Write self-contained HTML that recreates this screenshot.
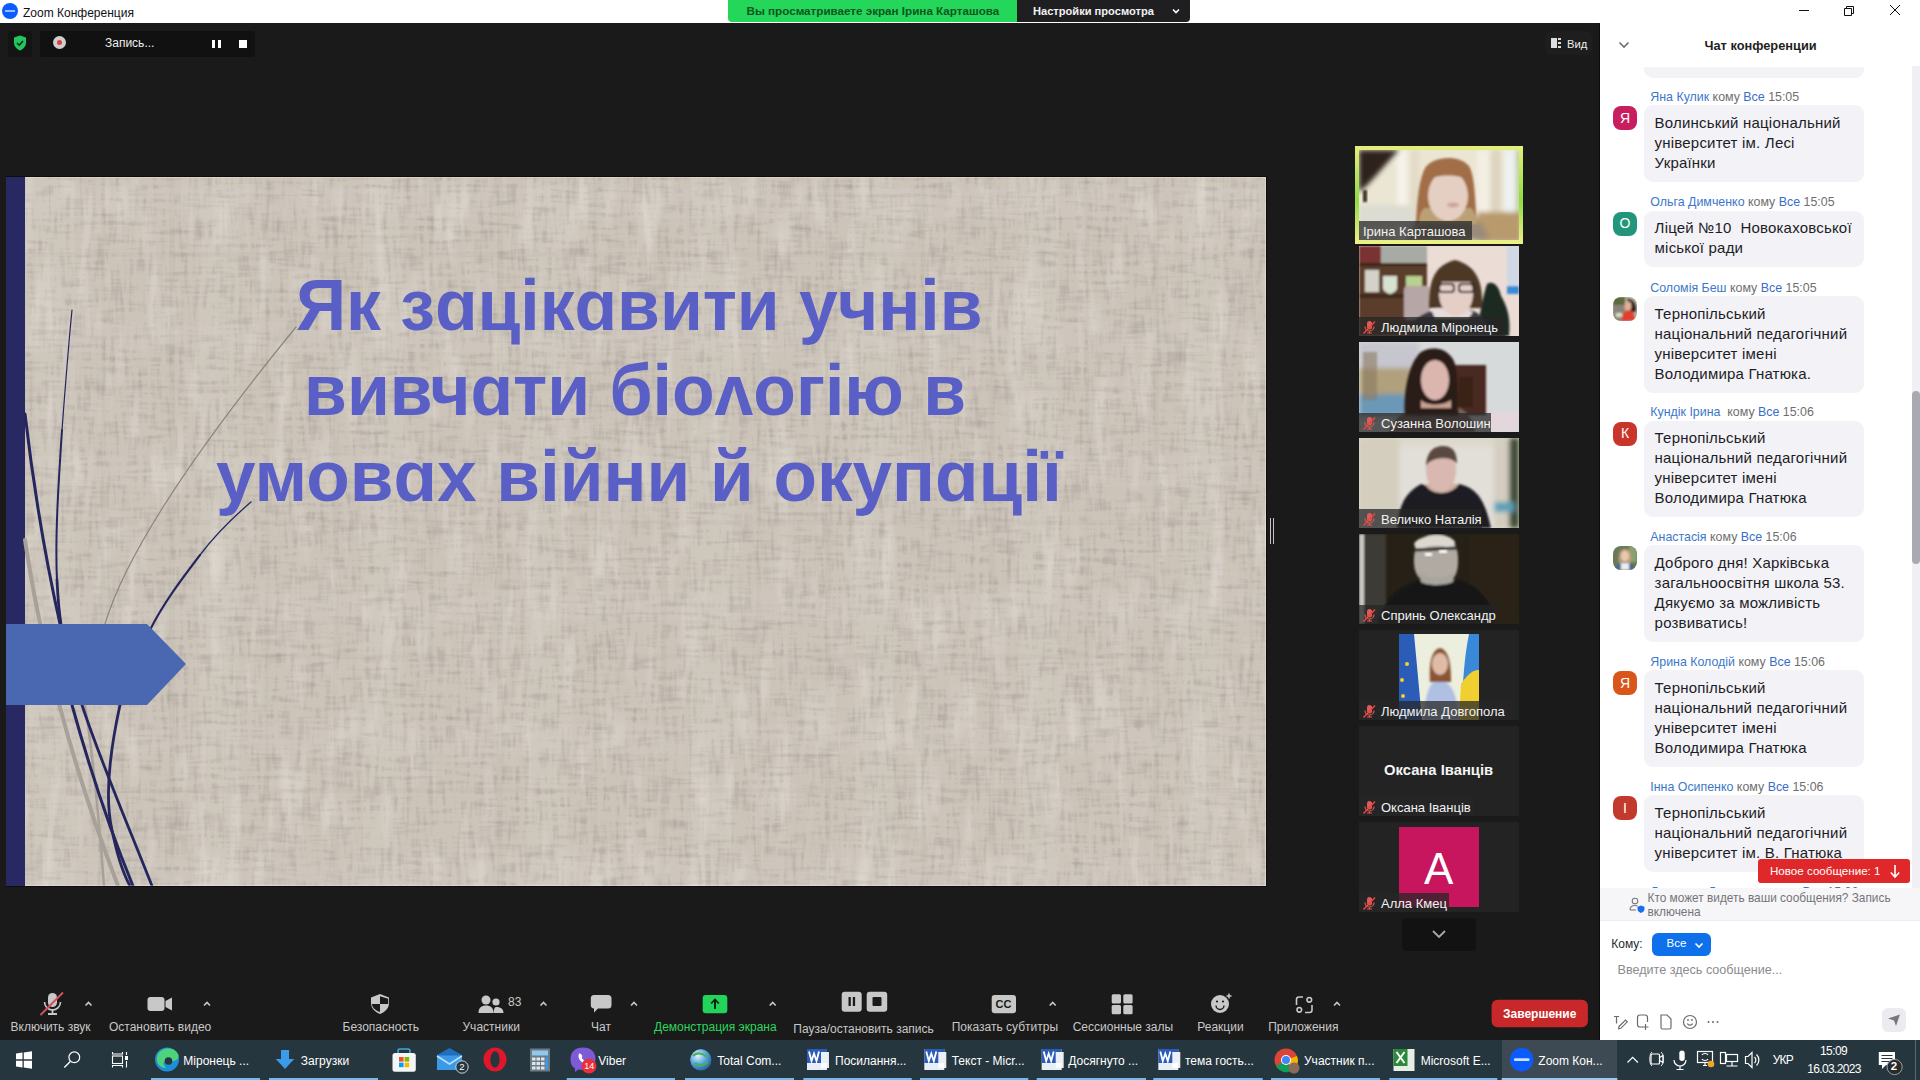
<!DOCTYPE html>
<html><head><meta charset="utf-8">
<style>
*{margin:0;padding:0;box-sizing:border-box}
html,body{width:1920px;height:1080px;overflow:hidden;background:#1a1a1a;font-family:"Liberation Sans",sans-serif}
.a{position:absolute}
.t{position:absolute;white-space:nowrap;line-height:1}
#title{left:0;top:0;width:1920px;height:23px;background:#fff}
#meet{left:0;top:23px;width:1600px;height:1017px;background:#1a1a1a}
#slide{left:6px;top:176px;width:1260px;height:710px;background:#c9c1b6;overflow:hidden}
#chat{left:1600px;top:23px;width:320px;height:1017px;background:#fff;overflow:hidden}
#task{left:0;top:1040px;width:1920px;height:40px;background:#26363e}
</style></head><body>
<!-- TITLE BAR -->
<div id="title" class="a">
  <div class="a" style="left:2px;top:3px;width:16px;height:16px;border-radius:50%;background:#0b5cff"></div>
  <div class="a" style="left:5px;top:10px;width:10px;height:2px;background:#9db9ff"></div>
  <div class="t" style="left:23px;top:6.5px;font-size:12px;color:#111">Zoom Конференция</div>
  <div class="a" style="left:728px;top:0;width:289px;height:22px;background:#24d65a;border-radius:0 0 0 4px"></div>
  <div class="t" style="left:746.5px;top:5.3px;font-size:11.65px;font-weight:bold;color:#0c5620">Вы просматриваете экран Ірина Карташова</div>
  <div class="a" style="left:1017px;top:0;width:173px;height:22px;background:#1f1f21;border-radius:0 0 4px 0"></div>
  <div class="t" style="left:1033px;top:5.5px;font-size:11.1px;font-weight:bold;color:#f2f2f2">Настройки просмотра</div>
  <svg class="a" style="left:1171px;top:7px" width="10" height="8" viewBox="0 0 10 8"><path d="M2 2.5 L5 5.5 L8 2.5" stroke="#fff" stroke-width="1.6" fill="none"/></svg>
  <div class="a" style="left:1799px;top:10px;width:10px;height:1px;background:#111"></div>
  <svg class="a" style="left:1843px;top:4px" width="12" height="12" viewBox="0 0 12 12"><path d="M1.5 4.5h7v7h-7z M3.5 4.5v-2h7v7h-2" stroke="#111" stroke-width="1" fill="none"/></svg>
  <svg class="a" style="left:1889px;top:4px" width="12" height="12" viewBox="0 0 12 12"><path d="M1 1L11 11M11 1L1 11" stroke="#111" stroke-width="1" fill="none"/></svg>
</div>

<!-- MEETING AREA -->
<div id="meet" class="a">
  <!-- security shield -->
  <div class="a" style="left:8px;top:8px;width:24px;height:26px;background:#141414;border-radius:4px"></div>
  <svg class="a" style="left:13px;top:12px" width="14" height="16" viewBox="0 0 14 16"><path d="M7 0.5 L13 2.5 V8 C13 11.5 10 14 7 15.5 C4 14 1 11.5 1 8 V2.5 Z" fill="#22c55e"/><path d="M4 8 L6.2 10.2 L10 6" stroke="#0a2a12" stroke-width="1.6" fill="none"/></svg>
  <!-- record bar -->
  <div class="a" style="left:40px;top:8px;width:215px;height:26px;background:#111;border-radius:2px"></div>
  <div class="a" style="left:53px;top:13px;width:13px;height:13px;border-radius:50%;background:#cfcfcf"></div>
  <div class="a" style="left:57px;top:17px;width:5px;height:5px;border-radius:50%;background:#e04040"></div>
  <div class="t" style="left:105px;top:14px;font-size:12px;color:#eee">Запись...</div>
  <div class="a" style="left:212px;top:17px;width:3px;height:8px;background:#fff"></div>
  <div class="a" style="left:218px;top:17px;width:3px;height:8px;background:#fff"></div>
  <div class="a" style="left:239px;top:17px;width:8px;height:8px;background:#fff"></div>
  <!-- view button -->
  <div class="a" style="left:1545px;top:8px;width:47px;height:24px;background:#1e1e1e;border-radius:6px"></div>
  <div class="a" style="left:1551px;top:15px;width:6px;height:10px;background:#ddd"></div>
  <div class="a" style="left:1558px;top:15px;width:3px;height:2px;background:#ddd"></div>
  <div class="a" style="left:1558px;top:19px;width:3px;height:2px;background:#ddd"></div>
  <div class="a" style="left:1558px;top:23px;width:3px;height:2px;background:#ddd"></div>
  <div class="t" style="left:1567px;top:15.5px;font-size:11.2px;color:#eee">Вид</div>
</div>

<!-- SLIDE -->
<div id="slide" class="a">
  <svg class="a" style="left:19px;top:0" width="1241" height="710">
    <filter id="lin" x="0" y="0" width="100%" height="100%">
      <feTurbulence type="fractalNoise" baseFrequency="0.03 0.22" numOctaves="2" seed="3" result="n1"/>
      <feTurbulence type="fractalNoise" baseFrequency="0.22 0.03" numOctaves="2" seed="7" result="n2"/>
      <feComposite in="n1" in2="n2" operator="arithmetic" k1="0" k2="0.5" k3="0.5" k4="0"/>
      <feColorMatrix type="matrix" values="0 0 0 0 0.42  0 0 0 0 0.38  0 0 0 0 0.34  -2.6 0 0 0 1.38"/>
    </filter>
    <filter id="lin2" x="0" y="0" width="100%" height="100%">
      <feTurbulence type="fractalNoise" baseFrequency="0.06 0.012" numOctaves="2" seed="11"/>
      <feColorMatrix type="matrix" values="0 0 0 0 1  0 0 0 0 0.98  0 0 0 0 0.95  0.7 0 0 0 -0.36"/>
    </filter>
    <rect width="1241" height="710" fill="#ccc4b9"/>
    <rect width="1241" height="710" filter="url(#lin)"/>
    <rect width="1241" height="710" filter="url(#lin2)"/>
    <rect width="1241" height="710" fill="url(#plaid)"/>
    <defs><pattern id="plaid" width="164" height="134" patternUnits="userSpaceOnUse" x="-20" y="-8"><rect x="0" y="0" width="6" height="134" fill="#7a6e62" opacity=".05"/><rect x="30" y="0" width="40" height="134" fill="#fff" opacity=".045"/><rect x="96" y="0" width="4" height="134" fill="#7a6e62" opacity=".045"/><rect x="0" y="20" width="164" height="30" fill="#fff" opacity=".04"/><rect x="0" y="84" width="164" height="5" fill="#7a6e62" opacity=".04"/></pattern></defs>
  </svg>
  <div class="a" style="left:0;top:0;width:19px;height:710px;background:#282862"></div>
  <svg class="a" style="left:0;top:0" width="1260" height="710" viewBox="6 176 1260 710">
    <g fill="none" stroke-linecap="round">
      <path d="M296 327 C 220 420, 130 540, 105 624" stroke="#8c857c" stroke-width="1.2"/>
      <path d="M25 540 C 40 640, 70 760, 118 886" stroke="#a8a199" stroke-width="4"/>
      <path d="M85 705 C 95 770, 100 830, 104 886" stroke="#a8a199" stroke-width="2.5"/>
      <path d="M72 310 C 68 350, 65 390, 62 430" stroke="#25265e" stroke-width="1.2"/><path d="M62 430 C 58 490, 55 540, 57 580" stroke="#25265e" stroke-width="2"/><path d="M57 580 C 58 600, 59 612, 61 624 L 82 705 C 100 760, 130 830, 152 886" stroke="#25265e" stroke-width="2.8"/>
      <path d="M25 414 C 35 500, 48 570, 60 624 L 72 705 C 90 770, 110 830, 133 886" stroke="#25265e" stroke-width="3"/>
      <path d="M251 502 C 230 520, 215 535, 200 555" stroke="#25265e" stroke-width="1.3"/><path d="M200 555 C 185 575, 165 600, 150 630" stroke="#25265e" stroke-width="2.1"/><path d="M150 630 C 130 670, 122 690, 120 705 C 108 760, 105 800, 112 830 C 118 860, 124 875, 130 886" stroke="#25265e" stroke-width="2.8"/>
    </g>
    <path d="M6 624 H147 L186 664 L147 705 H6 Z" fill="#4a67b1"/>
  </svg>
  <div class="t" style="left:290.2px;top:92.5px;font-size:72px;font-weight:bold;color:#5a5fc6;transform:scaleX(0.9676);transform-origin:0 0">Як зɑцікɑвити учнів</div>
  <div class="t" style="left:298.4px;top:177.5px;font-size:72px;font-weight:bold;color:#5a5fc6;transform:scaleX(0.9687);transform-origin:0 0">вивчɑти біоʌогію в</div>
  <div class="t" style="left:209.8px;top:263.5px;font-size:72px;font-weight:bold;color:#5a5fc6;transform:scaleX(0.9880);transform-origin:0 0">умовɑх війни й окупɑції</div>
</div>
<div class="a" style="left:6px;top:176px;width:1261px;height:1px;background:#0f0c09"></div>
<div class="a" style="left:6px;top:886px;width:1261px;height:1px;background:#0f0c09"></div>
<div class="a" style="left:1266px;top:176px;width:1px;height:711px;background:#0f0c09"></div>
<div class="a" style="left:25px;top:177px;width:1241px;height:1px;background:rgba(255,255,255,.25)"></div>
<div class="a" style="left:1265px;top:177px;width:1px;height:709px;background:rgba(255,255,255,.3)"></div>
<div class="a" style="left:25px;top:885px;width:1241px;height:1px;background:rgba(255,255,255,.3)"></div>
<!-- splitter -->
<div class="a" style="left:1270px;top:518px;width:1.2px;height:26px;background:#c4c4c4"></div>
<div class="a" style="left:1273px;top:518px;width:1.2px;height:26px;background:#c4c4c4"></div>

<!-- GALLERY -->
<div class="a" style="left:1355px;top:146px;width:168px;height:98px;background:linear-gradient(180deg,#e6ee7c 0%,#9fe04a 45%,#8fdc3e 55%,#eef08a 100%)"></div>
<svg width="0" height="0" style="position:absolute"><defs>
<filter id="b1" x="-20%" y="-20%" width="140%" height="140%"><feGaussianBlur stdDeviation="1.2"/></filter>
<filter id="b2" x="-20%" y="-20%" width="140%" height="140%"><feGaussianBlur stdDeviation="2.5"/></filter>
</defs></svg>
<!-- t1 Irina -->
<svg class="a" style="left:1359px;top:150px" width="160" height="90" viewBox="0 0 160 90">
  <rect width="160" height="90" fill="#ebe5d3"/>
  <g filter="url(#b2)">
    <rect x="38" y="0" width="10" height="90" fill="#f6f3ea"/>
    <rect x="52" y="0" width="8" height="90" fill="#e2dac6"/>
    <rect x="118" y="0" width="12" height="90" fill="#f4efe4"/>
    <rect x="132" y="0" width="10" height="90" fill="#ddd4be"/>
    <rect x="145" y="0" width="12" height="62" fill="#eef2f0"/>
    <rect x="157" y="0" width="5" height="90" fill="#b8c890"/>
    <rect x="0" y="55" width="55" height="20" fill="#dcdcd2"/>
    <rect x="118" y="62" width="44" height="30" fill="#b89a6c"/>
    <path d="M48 90 C52 75 62 68 75 66 L110 66 C122 70 128 80 130 90 Z" fill="#9a8c78"/>
  </g>
  <path d="M0 0 H40 C30 10 16 28 5 38 L0 42 Z" fill="#2e221a" filter="url(#b2)"/>
  <rect x="4" y="40" width="4" height="12" fill="#3a3028" filter="url(#b1)"/>
  <g filter="url(#b1)">
    <path d="M57 74 C58 50 60 30 66 18 C74 6 100 4 110 16 C116 26 116 50 118 74 Z" fill="#a26e46"/>
    <path d="M60 74 C60 66 62 60 66 58 L112 58 C116 62 118 68 118 74 Z" fill="#bca074"/>
    <ellipse cx="89" cy="46" rx="20" ry="25" fill="#e4cfc2"/>
    <path d="M68 26 C74 18 104 18 110 26 L110 30 C100 24 78 24 68 30 Z" fill="#a26e46"/>
    <ellipse cx="94" cy="55" rx="6" ry="2.5" fill="#cfa49c"/>
  </g>
</svg>
<!-- t2 Ludmila M -->
<svg class="a" style="left:1359px;top:246px" width="160" height="90" viewBox="0 0 160 90">
  <rect width="160" height="90" fill="#ecdcd6"/>
  <g filter="url(#b1)">
    <rect x="0" y="0" width="68" height="90" fill="#5a3c2a"/>
    <rect x="0" y="0" width="22" height="17" fill="#7a3030"/>
    <rect x="22" y="0" width="46" height="17" fill="#a8aaa4"/>
    <rect x="0" y="17" width="68" height="3" fill="#3a2618"/>
    <rect x="6" y="24" width="14" height="22" fill="#d4d2c8"/>
    <path d="M24 30 H38 V42 C38 46 31 48 31 48 C31 48 24 46 24 42 Z" fill="#d8e0d0"/>
    <rect x="47" y="30" width="16" height="12" fill="#b8d090"/>
    <rect x="0" y="48" width="68" height="4" fill="#3e2a1c"/>
    <rect x="148" y="0" width="12" height="40" fill="#cfd8e4"/>
    <rect x="148" y="40" width="12" height="8" fill="#3a8ad8"/>
    <rect x="45" y="40" width="26" height="34" rx="4" fill="#b6a6a6"/>
  </g>
  <g filter="url(#b1)">
    <path d="M118 90 C120 70 124 50 128 38 C134 34 140 40 142 50 C148 60 152 72 150 90 Z" fill="#1e2a20"/>
    <path d="M48 90 C52 74 64 66 78 64 L112 64 C124 68 128 78 130 90 Z" fill="#3a3a42"/>
    <path d="M72 64 C80 60 104 60 114 66 L110 72 H76 Z" fill="#e6dcdc"/>
    <path d="M70 62 C70 40 72 20 96 14 C120 20 124 40 123 62 Z" fill="#4e3828"/>
    <ellipse cx="97" cy="48" rx="17" ry="22" fill="#e4cec6"/>
    <path d="M78 32 C84 24 110 24 116 32 V36 H78 Z" fill="#4e3828"/>
    <rect x="80" y="38" width="15" height="8" rx="3" fill="none" stroke="#2a2626" stroke-width="2"/>
    <rect x="100" y="38" width="15" height="8" rx="3" fill="none" stroke="#2a2626" stroke-width="2"/>
  </g>
</svg>
<!-- t3 Suzanna -->
<svg class="a" style="left:1359px;top:342px" width="160" height="90" viewBox="0 0 160 90">
  <rect width="160" height="90" fill="#d6dada"/>
  <g filter="url(#b2)">
    <rect x="0" y="0" width="60" height="28" fill="#c6c6ce"/>
    <rect x="0" y="26" width="58" height="28" fill="#b0a07c"/>
    <rect x="0" y="52" width="50" height="22" fill="#6a98b6"/>
    <rect x="130" y="70" width="30" height="20" fill="#e4d6dc"/>
  </g>
  <g filter="url(#b1)">
    <rect x="4" y="10" width="14" height="48" fill="#8a7a60" opacity=".6"/>
    <rect x="95" y="23" width="32" height="50" fill="#4a2a20"/>
    <rect x="100" y="35" width="14" height="30" fill="#3a2018"/>
    <path d="M30 90 C34 76 48 66 62 64 L96 64 C108 68 114 78 116 90 Z" fill="#7a6058"/>
    <path d="M46 74 C44 50 50 20 62 10 C76 2 92 8 96 22 C100 40 98 60 100 74 Z" fill="#2a1a18"/>
    <ellipse cx="76" cy="38" rx="14" ry="20" fill="#dab6ae"/>
    <path d="M62 58 C68 64 84 64 92 58 L92 66 H62 Z" fill="#c8a090"/>
  </g>
</svg>
<!-- t4 Velychko -->
<svg class="a" style="left:1359px;top:438px" width="160" height="90" viewBox="0 0 160 90">
  <rect width="160" height="90" fill="#dcd8cc"/>
  <g filter="url(#b2)">
    <rect x="0" y="0" width="40" height="90" fill="#d4cebe"/>
    <rect x="40" y="8" width="95" height="82" fill="#e2ded8"/>
    <rect x="135" y="0" width="15" height="90" fill="#d4cec0"/>
    <rect x="150" y="0" width="10" height="90" fill="#3a4830"/>
    <rect x="135" y="64" width="20" height="10" fill="#5aa0b8"/>
  </g>
  <g filter="url(#b1)">
    <path d="M38 90 C40 70 44 56 62 46 L80 52 L100 46 C118 50 126 62 132 90 Z" fill="#1e1e24"/>
    <path d="M66 46 C72 58 92 58 100 46 Z" fill="#d0aea0"/>
    <ellipse cx="82" cy="32" rx="15" ry="22" fill="#d8b8b0"/>
    <path d="M67 28 C68 12 76 8 84 8 C94 8 98 14 98 26 C94 18 72 18 67 28 Z" fill="#5a4a40"/>
  </g>
</svg>
<!-- t5 Spryn -->
<svg class="a" style="left:1359px;top:534px" width="160" height="90" viewBox="0 0 160 90">
  <rect width="160" height="90" fill="#262016"/>
  <g filter="url(#b1)">
    <rect x="0" y="0" width="5" height="90" fill="#c8c8c4"/>
    <rect x="5" y="0" width="22" height="90" fill="#3e3a36"/>
    <rect x="110" y="0" width="50" height="90" fill="#2c2418"/>
    <path d="M18 90 C24 66 40 52 62 46 L100 46 C120 52 132 66 138 90 Z" fill="#141416"/>
    <path d="M55 30 C54 10 62 0 78 0 C94 0 100 12 99 30 C98 46 90 50 78 50 C64 50 56 44 55 30 Z" fill="#b0aaa2"/>
    <path d="M55 10 C58 0 92 -2 96 8 L94 16 C86 10 66 10 58 18 Z" fill="#dcd8d0"/>
    <path d="M60 36 C66 46 90 46 96 36 L94 48 C86 52 68 52 62 48 Z" fill="#a8a49e"/>
    <path d="M56 16 L98 14" stroke="#1a1a1a" stroke-width="3"/>
  </g>
  <rect x="66" y="19" width="7" height="3" fill="#fff" filter="url(#b1)"/>
  <rect x="80" y="16" width="8" height="3" fill="#fff" filter="url(#b1)"/>
</svg>
<!-- t6 Dovhopola -->
<div class="a" style="left:1359px;top:630px;width:160px;height:90px;background:#232323"></div>
<svg class="a" style="left:1399px;top:634px" width="80" height="86" viewBox="0 0 80 86">
  <rect width="80" height="86" fill="#eceede"/>
  <path d="M0 0 H15 L23 86 H0 Z" fill="#2a5cb8"/>
  <path d="M80 0 H70 C66 20 64 40 62 86 H80 Z" fill="#3a88d8"/>
  <path d="M80 36 C72 36 66 44 62 50 L60 86 H80 Z" fill="#f0d030"/>
  <g fill="#f0d030"><circle cx="8" cy="30" r="2"/><circle cx="3" cy="46" r="2"/><circle cx="4" cy="62" r="2"/></g>
  <g filter="url(#b1)">
    <path d="M25 86 C26 60 30 48 40 45 C52 48 58 58 60 86 Z" fill="#b0c0e2"/>
    <path d="M31 48 C30 30 32 16 41 14 C50 16 52 30 52 48 Z" fill="#8a5434"/>
    <ellipse cx="41" cy="30" rx="8" ry="11" fill="#e0bca8"/>
  </g>
</svg>
<!-- t7 Oksana -->
<div class="a" style="left:1359px;top:726px;width:160px;height:90px;background:#232323"></div>
<div class="t" style="left:1384px;top:763px;font-size:14.8px;font-weight:bold;color:#f4f4f4">Оксана Іванців</div>
<!-- t8 Alla -->
<div class="a" style="left:1359px;top:822px;width:160px;height:90px;background:#232323"></div>
<div class="a" style="left:1399px;top:827px;width:80px;height:80px;background:#c7155e"></div>
<div class="t" style="left:1424px;top:847px;font-size:44px;color:#fff">A</div>
<!-- labels -->
<div class="a" style="left:1359px;top:221px;width:113px;height:19px;background:rgba(38,38,38,0.74)"></div>
<div class="t" style="left:1363px;top:225px;font-size:13px;color:#f2f2f2">Ірина Карташова</div>
<div class="a" style="left:1359px;top:317px;width:146px;height:19px;background:rgba(38,38,38,0.74)"></div>
<svg class="a" style="left:1362px;top:320px" width="14" height="14" viewBox="0 0 14 14"><rect x="5" y="1" width="5" height="8.5" rx="2.5" fill="#e05a5a"/><path d="M3 6.5 a4.5 4.5 0 0 0 9 0 M7.5 11v2 M5 13h5" stroke="#e05a5a" stroke-width="1.2" fill="none"/><path d="M1.5 13.5 L13 1.5" stroke="#e84545" stroke-width="1.5"/></svg>
<div class="t" style="left:1381px;top:321px;font-size:13px;color:#f2f2f2">Людмила Міронець</div>
<div class="a" style="left:1359px;top:413px;width:132px;height:19px;background:rgba(38,38,38,0.74)"></div>
<svg class="a" style="left:1362px;top:416px" width="14" height="14" viewBox="0 0 14 14"><rect x="5" y="1" width="5" height="8.5" rx="2.5" fill="#e05a5a"/><path d="M3 6.5 a4.5 4.5 0 0 0 9 0 M7.5 11v2 M5 13h5" stroke="#e05a5a" stroke-width="1.2" fill="none"/><path d="M1.5 13.5 L13 1.5" stroke="#e84545" stroke-width="1.5"/></svg>
<div class="t" style="left:1381px;top:417px;font-size:13px;color:#f2f2f2">Сузанна Волошин</div>
<div class="a" style="left:1359px;top:509px;width:123px;height:19px;background:rgba(38,38,38,0.74)"></div>
<svg class="a" style="left:1362px;top:512px" width="14" height="14" viewBox="0 0 14 14"><rect x="5" y="1" width="5" height="8.5" rx="2.5" fill="#e05a5a"/><path d="M3 6.5 a4.5 4.5 0 0 0 9 0 M7.5 11v2 M5 13h5" stroke="#e05a5a" stroke-width="1.2" fill="none"/><path d="M1.5 13.5 L13 1.5" stroke="#e84545" stroke-width="1.5"/></svg>
<div class="t" style="left:1381px;top:513px;font-size:13px;color:#f2f2f2">Величко Наталія</div>
<div class="a" style="left:1359px;top:605px;width:138px;height:19px;background:rgba(38,38,38,0.74)"></div>
<svg class="a" style="left:1362px;top:608px" width="14" height="14" viewBox="0 0 14 14"><rect x="5" y="1" width="5" height="8.5" rx="2.5" fill="#e05a5a"/><path d="M3 6.5 a4.5 4.5 0 0 0 9 0 M7.5 11v2 M5 13h5" stroke="#e05a5a" stroke-width="1.2" fill="none"/><path d="M1.5 13.5 L13 1.5" stroke="#e84545" stroke-width="1.5"/></svg>
<div class="t" style="left:1381px;top:609px;font-size:13px;color:#f2f2f2">Спринь Олександр</div>
<div class="a" style="left:1359px;top:701px;width:153px;height:19px;background:rgba(38,38,38,0.74)"></div>
<svg class="a" style="left:1362px;top:704px" width="14" height="14" viewBox="0 0 14 14"><rect x="5" y="1" width="5" height="8.5" rx="2.5" fill="#e05a5a"/><path d="M3 6.5 a4.5 4.5 0 0 0 9 0 M7.5 11v2 M5 13h5" stroke="#e05a5a" stroke-width="1.2" fill="none"/><path d="M1.5 13.5 L13 1.5" stroke="#e84545" stroke-width="1.5"/></svg>
<div class="t" style="left:1381px;top:705px;font-size:13px;color:#f2f2f2">Людмила Довгопола</div>
<div class="a" style="left:1359px;top:797px;width:114px;height:19px;background:rgba(38,38,38,0.74)"></div>
<svg class="a" style="left:1362px;top:800px" width="14" height="14" viewBox="0 0 14 14"><rect x="5" y="1" width="5" height="8.5" rx="2.5" fill="#e05a5a"/><path d="M3 6.5 a4.5 4.5 0 0 0 9 0 M7.5 11v2 M5 13h5" stroke="#e05a5a" stroke-width="1.2" fill="none"/><path d="M1.5 13.5 L13 1.5" stroke="#e84545" stroke-width="1.5"/></svg>
<div class="t" style="left:1381px;top:801px;font-size:13px;color:#f2f2f2">Оксана Іванців</div>
<div class="a" style="left:1359px;top:893px;width:90px;height:19px;background:rgba(38,38,38,0.74)"></div>
<svg class="a" style="left:1362px;top:896px" width="14" height="14" viewBox="0 0 14 14"><rect x="5" y="1" width="5" height="8.5" rx="2.5" fill="#e05a5a"/><path d="M3 6.5 a4.5 4.5 0 0 0 9 0 M7.5 11v2 M5 13h5" stroke="#e05a5a" stroke-width="1.2" fill="none"/><path d="M1.5 13.5 L13 1.5" stroke="#e84545" stroke-width="1.5"/></svg>
<div class="t" style="left:1381px;top:897px;font-size:13px;color:#f2f2f2">Алла Кмец</div>

<!-- down button -->
<div class="a" style="left:1402px;top:918px;width:74px;height:33px;background:#121212;border-radius:4px"></div>
<svg class="a" style="left:1430px;top:928px" width="18" height="12" viewBox="0 0 18 12"><path d="M3 3 L9 9 L15 3" stroke="#aaa" stroke-width="1.8" fill="none"/></svg>


<!-- CHAT -->
<div id="chat" class="a"></div>
<div class="a" style="left:1599px;top:23px;width:1px;height:1017px;background:#0d0d0d"></div>
<div class="t" style="left:1704.5px;top:39.5px;font-size:12.8px;font-weight:bold;color:#1f1f1f">Чат конференции</div>
<svg class="a" style="left:1617px;top:40px" width="14" height="10" viewBox="0 0 14 10"><path d="M2.5 2.5 L7 7 L11.5 2.5" stroke="#6b6b72" stroke-width="1.6" fill="none"/></svg>
<div class="a" style="left:1912px;top:66px;width:8px;height:822px;background:#f0f0f4"></div>
<div class="a" style="left:1912px;top:391px;width:8px;height:173px;background:#a9a9b2;border-radius:4px"></div>
<div class="a" style="left:1600px;top:64px;width:312px;height:824px;overflow:hidden">
<div class="a" style="left:44px;top:3px;width:220px;height:10.5px;background:#f2f2f7;border-radius:0 0 9px 9px"></div>
<div class="t" style="left:50.3px;top:26.7px;font-size:12.4px;color:#6e6e6e"><span style="color:#3b78c9">Яна Кулик</span> кому <span style="color:#3a6cc8">Все</span> 15:05</div>
<div class="a" style="left:44px;top:41.2px;width:220px;height:76.5px;background:#f2f2f7;border-radius:9px"></div>
<div class="a" style="left:13px;top:42.2px;width:24px;height:24px;background:#c81d5e;border-radius:8px"></div>
<div class="t" style="left:13px;top:46.9px;width:24px;text-align:center;font-size:14px;color:#fff">Я</div>
<div class="a" style="left:54.6px;top:49.1px;height:20px;line-height:20px;white-space:nowrap;font-size:15px;letter-spacing:.2px;color:#1d1d25">Волинський національний</div>
<div class="a" style="left:54.6px;top:69.1px;height:20px;line-height:20px;white-space:nowrap;font-size:15px;letter-spacing:.2px;color:#1d1d25">університет ім. Лесі</div>
<div class="a" style="left:54.6px;top:89.1px;height:20px;line-height:20px;white-space:nowrap;font-size:15px;letter-spacing:.2px;color:#1d1d25">Українки</div>
<div class="t" style="left:50.3px;top:132.0px;font-size:12.4px;color:#6e6e6e"><span style="color:#3b78c9">Ольга Димченко</span> кому <span style="color:#3a6cc8">Все</span> 15:05</div>
<div class="a" style="left:44px;top:146.5px;width:220px;height:56.5px;background:#f2f2f7;border-radius:9px"></div>
<div class="a" style="left:13px;top:147.5px;width:24px;height:24px;background:#21967a;border-radius:8px"></div>
<div class="t" style="left:13px;top:152.2px;width:24px;text-align:center;font-size:14px;color:#fff">О</div>
<div class="a" style="left:54.6px;top:154.4px;height:20px;line-height:20px;white-space:nowrap;font-size:15px;letter-spacing:.2px;color:#1d1d25">Ліцей №10&nbsp; Новокаховської</div>
<div class="a" style="left:54.6px;top:174.4px;height:20px;line-height:20px;white-space:nowrap;font-size:15px;letter-spacing:.2px;color:#1d1d25">міської ради</div>
<div class="t" style="left:50.3px;top:217.5px;font-size:12.4px;color:#6e6e6e"><span style="color:#3b78c9">Соломія Беш</span> кому <span style="color:#3a6cc8">Все</span> 15:05</div>
<div class="a" style="left:44px;top:232.0px;width:220px;height:96.5px;background:#f2f2f7;border-radius:9px"></div>
<svg class="a" style="left:13px;top:232.5px" width="24" height="24" viewBox="0 0 24 24"><defs><clipPath id="av1"><rect width="24" height="24" rx="8"/></clipPath></defs><g clip-path="url(#av1)"><rect width="24" height="24" fill="#b8b4a0"/><g filter="url(#b1)"><rect x="0" y="0" width="12" height="8" fill="#5a6a3a"/><rect x="0" y="8" width="12" height="16" fill="#8a8478"/><rect x="3" y="16" width="6" height="4" fill="#d8e0c8"/><path d="M14 2 C20 2 23 6 23 14 L18 16 Z" fill="#2a1a1a"/><ellipse cx="15" cy="9" rx="3.5" ry="4.5" fill="#e0b098"/><path d="M8 24 C9 16 12 13 16 13 C20 14 22 18 22 24 Z" fill="#e04030"/></g></g></svg>
<div class="a" style="left:54.6px;top:239.9px;height:20px;line-height:20px;white-space:nowrap;font-size:15px;letter-spacing:.2px;color:#1d1d25">Тернопільський</div>
<div class="a" style="left:54.6px;top:259.9px;height:20px;line-height:20px;white-space:nowrap;font-size:15px;letter-spacing:.2px;color:#1d1d25">національний педагогічний</div>
<div class="a" style="left:54.6px;top:279.9px;height:20px;line-height:20px;white-space:nowrap;font-size:15px;letter-spacing:.2px;color:#1d1d25">університет імені</div>
<div class="a" style="left:54.6px;top:299.9px;height:20px;line-height:20px;white-space:nowrap;font-size:15px;letter-spacing:.2px;color:#1d1d25">Володимира Гнатюка.</div>
<div class="t" style="left:50.3px;top:342.0px;font-size:12.4px;color:#6e6e6e"><span style="color:#3b78c9">Кундік Ірина</span>&nbsp; кому <span style="color:#3a6cc8">Все</span> 15:06</div>
<div class="a" style="left:44px;top:356.5px;width:220px;height:96.5px;background:#f2f2f7;border-radius:9px"></div>
<div class="a" style="left:13px;top:357.5px;width:24px;height:24px;background:#c9352b;border-radius:8px"></div>
<div class="t" style="left:13px;top:362.2px;width:24px;text-align:center;font-size:14px;color:#fff">К</div>
<div class="a" style="left:54.6px;top:364.4px;height:20px;line-height:20px;white-space:nowrap;font-size:15px;letter-spacing:.2px;color:#1d1d25">Тернопільський</div>
<div class="a" style="left:54.6px;top:384.4px;height:20px;line-height:20px;white-space:nowrap;font-size:15px;letter-spacing:.2px;color:#1d1d25">національний педагогічний</div>
<div class="a" style="left:54.6px;top:404.4px;height:20px;line-height:20px;white-space:nowrap;font-size:15px;letter-spacing:.2px;color:#1d1d25">університет імені</div>
<div class="a" style="left:54.6px;top:424.4px;height:20px;line-height:20px;white-space:nowrap;font-size:15px;letter-spacing:.2px;color:#1d1d25">Володимира Гнатюка</div>
<div class="t" style="left:50.3px;top:466.8px;font-size:12.4px;color:#6e6e6e"><span style="color:#3b78c9">Анастасія</span> кому <span style="color:#3a6cc8">Все</span> 15:06</div>
<div class="a" style="left:44px;top:481.3px;width:220px;height:96.5px;background:#f2f2f7;border-radius:9px"></div>
<svg class="a" style="left:13px;top:481.8px" width="24" height="24" viewBox="0 0 24 24"><defs><clipPath id="av2"><rect width="24" height="24" rx="8"/></clipPath></defs><g clip-path="url(#av2)"><rect width="24" height="24" fill="#6a7a58"/><g filter="url(#b1)"><rect x="16" y="0" width="8" height="16" fill="#8aa070"/><path d="M6 18 C5 8 7 3 12 3 C17 3 19 8 18 18 Z" fill="#c0a070"/><ellipse cx="12" cy="10" rx="4" ry="5.5" fill="#e8c8b0"/><path d="M2 24 C3 18 6 16 12 16 C18 16 21 18 22 24 Z" fill="#4a6a90"/><rect x="8" y="17" width="8" height="7" fill="#eceef0"/></g></g></svg>
<div class="a" style="left:54.6px;top:489.2px;height:20px;line-height:20px;white-space:nowrap;font-size:15px;letter-spacing:.2px;color:#1d1d25">Доброго дня! Харківська</div>
<div class="a" style="left:54.6px;top:509.2px;height:20px;line-height:20px;white-space:nowrap;font-size:15px;letter-spacing:.2px;color:#1d1d25">загальноосвітня школа 53.</div>
<div class="a" style="left:54.6px;top:529.2px;height:20px;line-height:20px;white-space:nowrap;font-size:15px;letter-spacing:.2px;color:#1d1d25">Дякуємо за можливість</div>
<div class="a" style="left:54.6px;top:549.2px;height:20px;line-height:20px;white-space:nowrap;font-size:15px;letter-spacing:.2px;color:#1d1d25">розвиватись!</div>
<div class="t" style="left:50.3px;top:591.7px;font-size:12.4px;color:#6e6e6e"><span style="color:#3b78c9">Ярина Колодій</span> кому <span style="color:#3a6cc8">Все</span> 15:06</div>
<div class="a" style="left:44px;top:606.2px;width:220px;height:96.5px;background:#f2f2f7;border-radius:9px"></div>
<div class="a" style="left:13px;top:607.2px;width:24px;height:24px;background:#d9561a;border-radius:8px"></div>
<div class="t" style="left:13px;top:611.9px;width:24px;text-align:center;font-size:14px;color:#fff">Я</div>
<div class="a" style="left:54.6px;top:614.1px;height:20px;line-height:20px;white-space:nowrap;font-size:15px;letter-spacing:.2px;color:#1d1d25">Тернопільський</div>
<div class="a" style="left:54.6px;top:634.1px;height:20px;line-height:20px;white-space:nowrap;font-size:15px;letter-spacing:.2px;color:#1d1d25">національний педагогічний</div>
<div class="a" style="left:54.6px;top:654.1px;height:20px;line-height:20px;white-space:nowrap;font-size:15px;letter-spacing:.2px;color:#1d1d25">університет імені</div>
<div class="a" style="left:54.6px;top:674.1px;height:20px;line-height:20px;white-space:nowrap;font-size:15px;letter-spacing:.2px;color:#1d1d25">Володимира Гнатюка</div>
<div class="t" style="left:50.3px;top:716.9px;font-size:12.4px;color:#6e6e6e"><span style="color:#3b78c9">Інна Осипенко</span> кому <span style="color:#3a6cc8">Все</span> 15:06</div>
<div class="a" style="left:44px;top:731.4px;width:220px;height:76.5px;background:#f2f2f7;border-radius:9px"></div>
<div class="a" style="left:13px;top:732.4px;width:24px;height:24px;background:#c23a2c;border-radius:8px"></div>
<div class="t" style="left:13px;top:737.1px;width:24px;text-align:center;font-size:14px;color:#fff">І</div>
<div class="a" style="left:54.6px;top:739.3px;height:20px;line-height:20px;white-space:nowrap;font-size:15px;letter-spacing:.2px;color:#1d1d25">Тернопільський</div>
<div class="a" style="left:54.6px;top:759.3px;height:20px;line-height:20px;white-space:nowrap;font-size:15px;letter-spacing:.2px;color:#1d1d25">національний педагогічний</div>
<div class="a" style="left:54.6px;top:779.3px;height:20px;line-height:20px;white-space:nowrap;font-size:15px;letter-spacing:.2px;color:#1d1d25">університет ім. В. Гнатюка</div>
<div class="t" style="left:50.3px;top:822.3px;font-size:12.4px;color:#6e6e6e"><span style="color:#3b78c9">Людмила Довгопола</span> кому <span style="color:#3a6cc8">Все</span> 15:06</div>
<div class="a" style="left:44px;top:838.0px;width:220px;height:36.5px;background:#f2f2f7;border-radius:9px"></div>
<div class="a" style="left:13px;top:839.0px;width:24px;height:24px;background:#c23a2c;border-radius:8px"></div>
<div class="t" style="left:13px;top:843.7px;width:24px;text-align:center;font-size:14px;color:#fff">Л</div>
<div class="a" style="left:54.6px;top:845.9px;height:20px;line-height:20px;white-space:nowrap;font-size:15px;letter-spacing:.2px;color:#1d1d25">Тернопільський</div>
</div>
<div class="a" style="left:1600px;top:888px;width:320px;height:32px;background:#f6f6f9"></div>
<div class="a" style="left:1600px;top:920px;width:320px;height:1px;background:#ececf0"></div>
<svg class="a" style="left:1628px;top:896px" width="18" height="18" viewBox="0 0 18 18"><circle cx="7" cy="5" r="2.8" stroke="#77777f" stroke-width="1.1" fill="none"/><path d="M2 14 C2 10.5 4 9.5 7 9.5 C8 9.5 9 9.7 9.5 10" stroke="#77777f" stroke-width="1.1" fill="none"/><path d="M2 14h6" stroke="#77777f" stroke-width="1.1"/><path d="M13 9.5 L16.5 10.8 V13 C16.5 15 15 16.2 13 17 C11 16.2 9.5 15 9.5 13 V10.8 Z" fill="#1a6fe8"/></svg>
<div class="t" style="left:1647.5px;top:893px;font-size:11.85px;color:#747478">Кто может видеть ваши сообщения? Запись</div>
<div class="t" style="left:1647.5px;top:907px;font-size:11.85px;color:#747478">включена</div>
<div class="a" style="left:1758px;top:859px;width:152px;height:23.5px;background:#e0282a;border-radius:3px"></div>
<div class="t" style="left:1770px;top:865.3px;font-size:11.6px;color:#fff">Новое сообщение: 1</div>
<svg class="a" style="left:1888px;top:862px" width="14" height="18" viewBox="0 0 14 18"><path d="M7 3 V15 M2.8 10.5 L7 15 L11.2 10.5" stroke="#fff" stroke-width="1.6" fill="none"/></svg>
<div class="t" style="left:1611.3px;top:937.8px;font-size:12px;color:#2a2a2a">Кому:</div>
<div class="a" style="left:1652px;top:933.3px;width:58.8px;height:22.5px;background:#0e71eb;border-radius:6px"></div>
<div class="t" style="left:1666.5px;top:938px;font-size:11.5px;color:#fff">Все</div>
<svg class="a" style="left:1693px;top:940px" width="12" height="10" viewBox="0 0 12 10"><path d="M2.5 3.5 L6 7 L9.5 3.5" stroke="#fff" stroke-width="1.6" fill="none"/></svg>
<div class="t" style="left:1617.5px;top:964.3px;font-size:12.6px;color:#8a8a90">Введите здесь сообщение...</div>
<svg class="a" style="left:1610px;top:1010px" width="120" height="22" viewBox="1610 1010 120 22"><g fill="none" stroke="#6a6a72" stroke-width="1.2"><path d="M1614 1016.5 h5 M1616.5 1016.5 v7"/><path d="M1619 1026.5 L1625.5 1020 L1627.3 1021.8 L1620.8 1028.3 L1618.6 1028.8 Z"/><path d="M1643 1027 h-3 a2.5 2.5 0 0 1 -2.5 -2.5 V1017.5 a2.5 2.5 0 0 1 2.5 -2.5 H1645 a2.5 2.5 0 0 1 2.5 2.5 V1022"/><path d="M1645.5 1024 v6 M1642.5 1027 h6"/><path d="M1661 1015 H1667 L1671 1019 V1027.5 a1.5 1.5 0 0 1 -1.5 1.5 H1662.5 a1.5 1.5 0 0 1 -1.5 -1.5 Z"/><circle cx="1690" cy="1022" r="6.5"/><path d="M1687.3 1023.5 a3 3 0 0 0 5.4 0"/></g><circle cx="1688" cy="1020" r=".9" fill="#6a6a72"/><circle cx="1692" cy="1020" r=".9" fill="#6a6a72"/><circle cx="1708.5" cy="1022" r="1" fill="#6a6a72"/><circle cx="1713" cy="1022" r="1" fill="#6a6a72"/><circle cx="1717.5" cy="1022" r="1" fill="#6a6a72"/></svg>
<div class="a" style="left:1881.7px;top:1008px;width:24px;height:23.7px;background:#ececf0;border-radius:6px"></div>
<svg class="a" style="left:1885px;top:1011px" width="18" height="18" viewBox="0 0 18 18"><path d="M3 7.5 L15 3.5 L11 15 L9 9.5 Z" fill="#77777f"/></svg>
<!-- TOOLBAR -->
<svg class="a" style="left:0;top:985px" width="1600" height="55" viewBox="0 985 1600 55">
  <g fill="#c8c8c8">
    <!-- mic -->
    <rect x="48" y="993" width="9" height="14" rx="4.5"/>
    <path d="M44.5 1002 a8 8 0 0 0 16 0" stroke="#c8c8c8" stroke-width="1.6" fill="none"/>
    <rect x="51.6" y="1009" width="1.8" height="5"/>
    <rect x="48" y="1013" width="9" height="2"/>
    <path d="M40.5 1015 L63 992.5" stroke="#d2505a" stroke-width="2"/>
    <!-- camera -->
    <rect x="147.5" y="997" width="17" height="14" rx="3"/>
    <path d="M165.5 1001 L172 997.5 V1010.5 L165.5 1007 Z"/>
    <!-- shield -->
    <path d="M380 994 L389 997.5 V1003 C389 1008.5 385 1012 380 1014 C375 1012 371 1008.5 371 1003 V997.5 Z"/>
    <path d="M380 996.3 V1004 H371.8 C372 1006.5 374 1010 380 1012 V1004 H388.2 V998.7 Z" fill="#1a1a1a"/>
    <!-- participants -->
    <circle cx="486" cy="1000" r="4.5"/>
    <path d="M478.5 1013 C478.5 1007.5 481.5 1005.5 486 1005.5 C490.5 1005.5 493.5 1007.5 493.5 1013 Z"/>
    <circle cx="496" cy="1002" r="3.6"/>
    <path d="M493.5 1013 C494 1009 494.5 1007 496 1007 C500 1007 503.5 1008.5 503.5 1013 Z"/>
    <!-- chat -->
    <path d="M594 995 H608 a3.5 3.5 0 0 1 3.5 3.5 V1005 a3.5 3.5 0 0 1 -3.5 3.5 H598 L594 1012.5 V1008.5 a3.5 3.5 0 0 1 -3.2 -3.5 V998.5 a3.5 3.5 0 0 1 3.2 -3.5 Z"/>
    <!-- record pause/stop -->
    <rect x="841.7" y="991.7" width="20" height="20" rx="3"/>
    <rect x="866.7" y="991.7" width="20.5" height="20" rx="3"/>
    <!-- cc -->
    <rect x="991.7" y="995" width="24.3" height="18.3" rx="3"/>
    <!-- breakout -->
    <rect x="1111.7" y="994.3" width="9.3" height="9.3" rx="1.5"/>
    <rect x="1123.3" y="994.3" width="9.3" height="9.3" rx="1.5"/>
    <rect x="1111.7" y="1005" width="9.3" height="9.3" rx="1.5"/>
    <rect x="1123.3" y="1005" width="9.3" height="9.3" rx="1.5"/>
    <!-- reactions -->
    <circle cx="1220" cy="1004" r="9"/>
    <path d="M1226.5 996 h5 M1229 993.5 v5" stroke="#c8c8c8" stroke-width="1.5"/>
    <path d="M1216 1005.5 a4 4 0 0 0 8 0" stroke="#1a1a1a" stroke-width="1.4" fill="none"/>
    <circle cx="1217" cy="1001.5" r="1.1" fill="#1a1a1a"/>
    <circle cx="1223" cy="1001.5" r="1.1" fill="#1a1a1a"/>
    <path d="M1226.5 996 h5 M1229 993.5 v5" stroke="#1a1a1a" stroke-width="3.5" opacity="0"/>
  </g>
  <g fill="none" stroke="#c8c8c8" stroke-width="1.6">
    <!-- apps -->
    <path d="M1296.5 1005 V999.5 a2.5 2.5 0 0 1 2.5 -2.5 H1303"/>
    <path d="M1312 1005 V1010 a2.5 2.5 0 0 1 -2.5 2.5 H1305"/>
    <circle cx="1309.3" cy="999.8" r="2.3"/>
    <circle cx="1299.3" cy="1009.8" r="2.3"/>
    <!-- carets -->
    <path d="M85.5 1005.5 L88.5 1002.5 L91.5 1005.5"/>
    <path d="M204 1005.5 L207 1002.5 L210 1005.5"/>
    <path d="M540.5 1005.5 L543.5 1002.5 L546.5 1005.5"/>
    <path d="M631 1005.5 L634 1002.5 L637 1005.5"/>
    <path d="M769.7 1005.5 L772.7 1002.5 L775.7 1005.5"/>
    <path d="M1049.7 1005.5 L1052.7 1002.5 L1055.7 1005.5"/>
    <path d="M1334 1005.5 L1337 1002.5 L1340 1005.5"/>
  </g>
  <!-- pause bars/stop -->
  <rect x="848.5" y="997" width="2.3" height="9" fill="#1a1a1a"/>
  <rect x="852.8" y="997" width="2.3" height="9" fill="#1a1a1a"/>
  <rect x="872.5" y="997" width="9" height="9" rx="1" fill="#1a1a1a"/>
  <!-- share -->
  <rect x="702.7" y="995" width="24.6" height="18.3" rx="3" fill="#23d45a"/>
  <path d="M715 1009 V1000 M711.2 1003.5 L715 999.5 L718.8 1003.5" stroke="#0a1a10" stroke-width="1.8" fill="none"/>
  <!-- end -->
  <rect x="1491.6" y="999.7" width="96.3" height="27.5" rx="6" fill="#c8282a"/>
</svg>
<div class="t" style="left:995.5px;top:998.5px;font-size:11px;font-weight:bold;color:#1a1a1a">CC</div>
<div class="t" style="left:508px;top:996px;font-size:12px;color:#c8c8c8">83</div>
<div class="t" style="left:10.5px;top:1021.1px;font-size:12px;color:#c8c8c8">Включить звук</div>
<div class="t" style="left:109px;top:1021.1px;font-size:12px;color:#c8c8c8">Остановить видео</div>
<div class="t" style="left:342.5px;top:1021.1px;font-size:12px;color:#c8c8c8">Безопасность</div>
<div class="t" style="left:462.5px;top:1021.1px;font-size:12px;color:#c8c8c8">Участники</div>
<div class="t" style="left:591px;top:1021.1px;font-size:12px;color:#c8c8c8">Чат</div>
<div class="t" style="left:654px;top:1021.1px;font-size:12px;color:#2ad65e">Демонстрация экрана</div>
<div class="t" style="left:793.3px;top:1022.6px;font-size:12px;color:#c8c8c8">Пауза/остановить запись</div>
<div class="t" style="left:951.7px;top:1021.1px;font-size:12px;color:#c8c8c8">Показать субтитры</div>
<div class="t" style="left:1072.7px;top:1021.1px;font-size:12px;color:#c8c8c8">Сессионные залы</div>
<div class="t" style="left:1197.3px;top:1021.1px;font-size:12px;color:#c8c8c8">Реакции</div>
<div class="t" style="left:1268.2px;top:1021.1px;font-size:12px;color:#c8c8c8">Приложения</div>
<div class="t" style="left:1503px;top:1008px;font-size:12px;font-weight:bold;color:#fff">Завершение</div>


<!-- TASKBAR -->
<div id="task" class="a"></div>
<div class="a" style="left:1501.7px;top:1040px;width:115.6px;height:40px;background:#3d4a53"></div>
<svg class="a" style="left:0;top:1040px" width="1920" height="40" viewBox="0 1040 1920 40">
  <!-- underlines -->
  <g fill="#76b9ed">
    <rect x="151" y="1078" width="109" height="2"/>
    <rect x="269" y="1078" width="109" height="2"/>
    <rect x="566.7" y="1078" width="108.3" height="2"/>
    <rect x="685" y="1078" width="109" height="2"/>
    <rect x="803.3" y="1078" width="108.4" height="2"/>
    <rect x="920" y="1078" width="108.3" height="2"/>
    <rect x="1036.7" y="1078" width="109.3" height="2"/>
    <rect x="1153.3" y="1078" width="109.4" height="2"/>
    <rect x="1271" y="1078" width="109" height="2"/>
    <rect x="1389.3" y="1078" width="108" height="2"/>
    <rect x="1501.7" y="1078" width="115.6" height="2" fill="#99ccf4"/>
  </g>
  <!-- windows logo -->
  <path d="M16 1053.5 L22.5 1052.6 V1059.3 H16 Z M23.8 1052.4 L32 1051.3 V1059.3 H23.8 Z M16 1060.7 H22.5 V1067.4 L16 1066.5 Z M23.8 1060.7 H32 V1068.7 L23.8 1067.6 Z" fill="#fff"/>
  <!-- search -->
  <circle cx="74.3" cy="1057.3" r="5.4" stroke="#fff" stroke-width="1.2" fill="none"/>
  <path d="M70.5 1061.2 L64.3 1067.5" stroke="#fff" stroke-width="1.3"/>
  <!-- task view -->
  <g stroke="#fff" stroke-width="1.1" fill="none">
    <path d="M112.5 1052 V1054 H122.5 V1052 M112.5 1067.5 V1065.5 H122.5 V1067.5"/>
    <rect x="112.5" y="1056" width="10" height="7.5"/>
    <path d="M126.5 1052 V1055 M126.5 1061 V1067.5"/>
  </g>
  <rect x="125" y="1056" width="3" height="4" fill="#fff"/>
  <!-- edge -->
  <circle cx="167" cy="1059.6" r="12" fill="#1b8fd8"/>
  <path d="M158 1054 C162 1047 175 1046 178.5 1055 C179 1060 175 1062 168 1061 C163 1060 162 1064 166 1068 C160 1068 154 1062 158 1054 Z" fill="#4fd37a"/>
  <circle cx="168.5" cy="1061" r="3.8" fill="#26363e"/>
  <!-- download arrow -->
  <path d="M281 1050 H289 V1059 H294.2 L285 1069 L275.8 1059 H281 Z" fill="#3b9be8"/>
  <!-- store -->
  <rect x="392.5" y="1053" width="23.3" height="18.7" rx="2.5" fill="#f4f4f4"/>
  <path d="M398 1053 V1051 a2 2 0 0 1 2 -2 H408 a2 2 0 0 1 2 2 V1053" stroke="#40a8d8" stroke-width="1.6" fill="none"/>
  <rect x="399" y="1057" width="4.6" height="4.6" fill="#f25022"/><rect x="404.6" y="1057" width="4.6" height="4.6" fill="#7fba00"/>
  <rect x="399" y="1062.6" width="4.6" height="4.6" fill="#00a4ef"/><rect x="404.6" y="1062.6" width="4.6" height="4.6" fill="#ffb900"/>
  <!-- mail -->
  <path d="M437 1055 L449.5 1048 L462 1055 V1070 H437 Z" fill="#1f6fc0"/>
  <rect x="437" y="1055.5" width="25" height="14.5" fill="#3a9ae8"/>
  <path d="M437 1056 L449.5 1064 L462 1056" stroke="#bfe0fa" stroke-width="1.5" fill="none"/>
  <circle cx="462" cy="1067" r="6.2" fill="#26363e" stroke="#cfd6da" stroke-width="1"/>
  <!-- opera -->
  <ellipse cx="495" cy="1059.5" rx="11.5" ry="12" fill="#e0162b"/>
  <ellipse cx="495" cy="1059.5" rx="4.6" ry="8.2" fill="#26363e"/>
  <!-- calc -->
  <rect x="530" y="1048.5" width="20" height="23" fill="#6c7a86"/>
  <rect x="532" y="1050.5" width="16" height="5" fill="#90c8f0"/>
  <g fill="#dfe6ea"><rect x="532" y="1057.5" width="3.5" height="3"/><rect x="536.5" y="1057.5" width="3.5" height="3"/><rect x="541" y="1057.5" width="3.5" height="3"/><rect x="532" y="1062" width="3.5" height="3"/><rect x="536.5" y="1062" width="3.5" height="3"/><rect x="541" y="1062" width="3.5" height="3"/><rect x="532" y="1066.5" width="3.5" height="3"/><rect x="536.5" y="1066.5" width="3.5" height="3"/><rect x="541" y="1066.5" width="3.5" height="3"/></g>
  <rect x="545.5" y="1057.5" width="2.5" height="12" fill="#3a9ae8"/>
  <!-- viber -->
  <path d="M583 1047.5 C575 1047.5 570.5 1052 570.5 1059 C570.5 1064 572 1067 575 1068.5 V1072 L578.5 1069.5 C580 1069.8 581.5 1070 583 1070 C591 1070 595.5 1065.5 595.5 1059 C595.5 1052 591 1047.5 583 1047.5 Z" fill="#7d5bd6"/>
  <path d="M579 1053.5 C581 1053 583 1056 582 1057 C581.5 1058 583 1060 585 1061 C586 1060 589 1062 588.5 1064 C586 1066 576 1060 579 1053.5 Z" fill="#fff"/>
  <circle cx="589" cy="1066" r="7.5" fill="#e8303a"/>
  <!-- total commander -->
  <circle cx="700.8" cy="1059.8" r="10.5" fill="#3a8cd0"/>
  <circle cx="700.8" cy="1059.8" r="10.5" fill="url(#tcg)"/>
  <path d="M693 1056 C697 1052 703 1053 707 1057 M695 1063 C699 1066 704 1066 708 1062" stroke="#4caf50" stroke-width="2.2" fill="none"/>
  <defs><radialGradient id="tcg" cx="0.35" cy="0.3" r="0.8"><stop offset="0" stop-color="#e8f4ff"/><stop offset="0.5" stop-color="#5aa8e0"/><stop offset="1" stop-color="#1a5a9a"/></radialGradient></defs>
  <!-- word icons -->
  <g id="w1">
    <rect x="807" y="1049" width="20" height="21" fill="#e8eef6"/>
    <rect x="807" y="1049" width="20" height="14" fill="#2b5db8"/>
    <path d="M809 1051.5 L811.5 1061 L814 1053.5 L816.5 1061 L819 1051.5" stroke="#fff" stroke-width="1.8" fill="none"/>
    <rect x="821" y="1052" width="8" height="16" fill="#fff" opacity=".9"/>
  </g>
  <use href="#w1" x="117.3"/>
  <use href="#w1" x="234.7"/>
  <use href="#w1" x="351.3"/>
  <!-- chrome -->
  <circle cx="1286" cy="1060" r="11.5" fill="#db4437"/>
  <path d="M1286 1060 L1276 1066 A11.5 11.5 0 0 0 1293 1070 Z" fill="#0f9d58"/>
  <path d="M1286 1060 L1293 1070 A11.5 11.5 0 0 0 1297 1056 Z" fill="#f4b400"/>
  <circle cx="1286" cy="1060" r="5" fill="#fff"/><circle cx="1286" cy="1060" r="4" fill="#4285f4"/>
  <circle cx="1294" cy="1068" r="5.5" fill="#8a6a5a"/>
  <!-- excel -->
  <rect x="1393.5" y="1049" width="21" height="22" fill="#e6efe6"/>
  <rect x="1393.5" y="1049" width="14" height="17" fill="#2a8a3a"/>
  <path d="M1396.5 1052 L1404.5 1063 M1404.5 1052 L1396.5 1063" stroke="#fff" stroke-width="2"/>
  <!-- zoom -->
  <circle cx="1521.7" cy="1059.7" r="11.7" fill="#0b5cff"/>
  <rect x="1514" y="1058.3" width="15.5" height="2.6" rx="1" fill="#cfe0ff"/>
  <!-- tray -->
  <g stroke="#fff" stroke-width="1.2" fill="none">
    <path d="M1627.5 1062.5 L1632.7 1057.3 L1637.9 1062.5"/>
    <rect x="1651" y="1054" width="8.5" height="10" rx="1"/>
    <path d="M1659.5 1057.5 L1663 1055.5 V1062.5 L1659.5 1060.5"/>
    <path d="M1652 1052 C1649 1054 1649 1064 1652 1066 M1661 1052 C1664 1054 1664 1064 1661 1066" stroke-width="0.9"/>
    <path d="M1674 1060 a6 6 0 0 0 12 0 M1680 1066 v3.5 M1676.5 1069.5 h7"/>
    <rect x="1697.5" y="1051.5" width="15" height="11"/>
    <path d="M1703 1065.5 h4 M1705 1062.5 v3"/>
    <path d="M1702 1055 C1703 1053 1707 1053 1708 1055 M1708 1059 C1707 1061 1703 1061 1702 1059"/>
    <rect x="1720.5" y="1052.5" width="5" height="11"/>
    <rect x="1726.5" y="1054.5" width="11" height="7"/>
    <path d="M1726.5 1066 h11 M1732 1061.5 v4.5"/>
    <path d="M1745.5 1056.5 h2.5 l4 -4 v15 l-4 -4 h-2.5 Z"/>
    <path d="M1754.5 1057 a4 4 0 0 1 0 6 M1756.5 1054.5 a7.5 7.5 0 0 1 0 11"/>

  </g>
  <rect x="1679.3" y="1050.5" width="5.4" height="10.5" rx="2.7" fill="#fff"/>
  <circle cx="1711" cy="1064" r="3.3" fill="#f5a524"/>
  <path d="M1878.8 1052 H1895 V1065 H1886 L1882 1069 V1065 H1878.8 Z" fill="#fff"/><path d="M1881.5 1055.5 h11 M1881.5 1058.5 h11 M1881.5 1061.5 h8" stroke="#26363e" stroke-width="1.2"/><circle cx="1894.6" cy="1067" r="7.6" fill="#2a2a2a" stroke="#9aa0a4" stroke-width="1"/><rect x="1915" y="1040" width="1" height="40" fill="#5a6a72"/>
</svg>
<div class="t" style="left:462px;top:1062px;width:1px;font-size:1px"></div>
<div class="t" style="left:459.3px;top:1061.8px;font-size:9.5px;color:#fff">2</div>
<div class="t" style="left:584.3px;top:1061.5px;font-size:9px;color:#fff">14</div>
<div class="t" style="left:1890.8px;top:1060.8px;font-size:11.5px;font-weight:bold;color:#fff">2</div>
<div class="t" style="left:183.3px;top:1054.8px;font-size:12px;color:#fff">Міронець ...</div>
<div class="t" style="left:300.8px;top:1054.8px;font-size:12px;color:#fff">Загрузки</div>
<div class="t" style="left:598.3px;top:1054.8px;font-size:12px;color:#fff">Viber</div>
<div class="t" style="left:717.3px;top:1054.8px;font-size:12px;color:#fff">Total Com...</div>
<div class="t" style="left:835px;top:1054.8px;font-size:12px;color:#fff">Посилання...</div>
<div class="t" style="left:951.7px;top:1054.8px;font-size:12px;color:#fff">Текст - Micr...</div>
<div class="t" style="left:1068.3px;top:1054.8px;font-size:12px;color:#fff">Досягнуто ...</div>
<div class="t" style="left:1185px;top:1054.8px;font-size:12px;color:#fff">тема гость...</div>
<div class="t" style="left:1304px;top:1054.8px;font-size:12px;color:#fff">Участник п...</div>
<div class="t" style="left:1420.7px;top:1054.8px;font-size:12px;color:#fff">Microsoft E...</div>
<div class="t" style="left:1538.3px;top:1054.8px;font-size:12px;color:#fff">Zoom Кон...</div>
<div class="t" style="left:1772.7px;top:1053.6px;font-size:12px;letter-spacing:-.8px;color:#fff">УКР</div>
<div class="t" style="left:1820px;top:1044.9px;font-size:12px;letter-spacing:-.6px;color:#fff">15:09</div>
<div class="t" style="left:1807.3px;top:1062.8px;font-size:12px;letter-spacing:-.65px;color:#fff">16.03.2023</div>

</body></html>
